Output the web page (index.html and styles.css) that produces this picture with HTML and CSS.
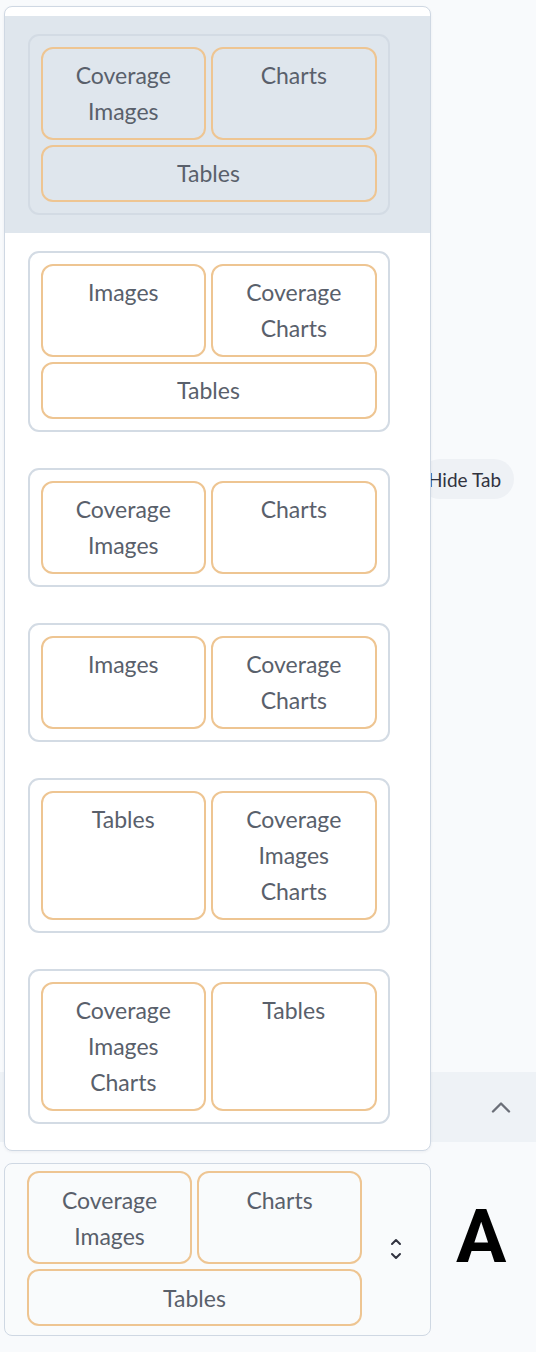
FILE: index.html
```html
<!DOCTYPE html>
<html>
<head>
<meta charset="utf-8">
<link rel="stylesheet" href="styles.css">
</head>
<body>
<div class="page">
  <div class="backdrop">
    <div class="tab-row"><span class="pill">Hide Tab</span></div>
    <div class="band">
      <svg class="band-chevron" width="20" height="12" viewBox="0 0 20 12"><path d="M2 10.5 L10 2.5 L18 10.5" fill="none" stroke="#6b6f78" stroke-width="2.4" stroke-linecap="round" stroke-linejoin="round"/></svg>
    </div>
    <div class="select-row">
      <div class="select">
        <div class="layout">
          <div class="box"><div>Coverage</div><div>Images</div></div>
          <div class="box"><div>Charts</div></div>
          <div class="box wide"><div>Tables</div></div>
        </div>
        <svg class="updown" width="14" height="26" viewBox="0 0 14 26"><path d="M3 8 L7 4 L11 8" fill="none" stroke="#31333f" stroke-width="2" stroke-linecap="round" stroke-linejoin="round"/><path d="M3 18 L7 22 L11 18" fill="none" stroke="#31333f" stroke-width="2" stroke-linecap="round" stroke-linejoin="round"/></svg>
      </div>
      <div class="big-a">A</div>
    </div>
  </div>

  <div class="menu">
    <div class="option active">
      <div class="card layout">
        <div class="box"><div>Coverage</div><div>Images</div></div>
        <div class="box"><div>Charts</div></div>
        <div class="box wide"><div>Tables</div></div>
      </div>
    </div>
    <div class="option">
      <div class="card layout">
        <div class="box"><div>Images</div></div>
        <div class="box"><div>Coverage</div><div>Charts</div></div>
        <div class="box wide"><div>Tables</div></div>
      </div>
    </div>
    <div class="option">
      <div class="card layout">
        <div class="box"><div>Coverage</div><div>Images</div></div>
        <div class="box"><div>Charts</div></div>
      </div>
    </div>
    <div class="option">
      <div class="card layout">
        <div class="box"><div>Images</div></div>
        <div class="box"><div>Coverage</div><div>Charts</div></div>
      </div>
    </div>
    <div class="option">
      <div class="card layout">
        <div class="box"><div>Tables</div></div>
        <div class="box"><div>Coverage</div><div>Images</div><div>Charts</div></div>
      </div>
    </div>
    <div class="option">
      <div class="card layout">
        <div class="box"><div>Coverage</div><div>Images</div><div>Charts</div></div>
        <div class="box"><div>Tables</div></div>
      </div>
    </div>
  </div>
</div>
</body>
</html>
```

FILE: styles.css
```css
* { box-sizing: border-box; }
html, body { margin: 0; padding: 0; }
body {
  background: #f8fafc;
  font-family: "Lato", "Source Sans Pro", "Noto Sans", sans-serif;
  color: #31333f;
  width: 536px;
  height: 1352px;
  overflow: hidden;
}
.page { position: relative; width: 536px; height: 1352px; }

.backdrop { display: flex; flex-direction: column; }
.tab-row { padding-top: 459px; padding-left: 420px; height: 499px; }
.pill {
  display: inline-flex;
  align-items: center;
  height: 40px;
  padding: 0 13px 0 8px;
  border-radius: 20px;
  background: #eef1f5;
  font-family: "Lato", "Source Sans Pro", sans-serif;
  font-size: 19px;
  color: #31333f;
}
.band {
  margin-top: 573px;
  height: 70px;
  background: #eef2f6;
  display: flex;
  align-items: center;
  justify-content: flex-end;
  padding-right: 25px;
}
.band-chevron { display: block; margin-top: -1px; }

.select-row {
  margin-top: 21px;
  display: flex;
  align-items: flex-start;
  padding-left: 4px;
}
.select {
  width: 427px;
  height: 173px;
  border: 1.5px solid #cfd8e3;
  border-radius: 8px;
  background: #f9fbfc;
  display: flex;
  align-items: center;
  padding: 0 0 2px 22px;
}
.select .layout { width: 335px; }
.updown { display: block; margin-left: 27px; }
.big-a {
  margin-left: 25px;
  margin-top: 36px;
  font-family: "Roboto", "Liberation Sans", Arial, sans-serif;
  font-weight: 700;
  font-size: 75px;
  line-height: 1;
  color: #000;
}

.layout {
  display: grid;
  grid-template-columns: 1fr 1fr;
  gap: 5px;
}
.box {
  border: 2px solid #eec592;
  border-radius: 12px;
  padding: 8.5px 4px;
  text-align: center;
  font-size: 23px;
  line-height: 36px;
  color: #59606b;
}
.box.wide { grid-column: 1 / span 2; }

.menu {
  position: absolute;
  top: 6px;
  left: 4px;
  width: 427px;
  background: #fff;
  border: 1.5px solid #cfd8e3;
  border-radius: 8px;
  padding: 8.5px 0;
  box-shadow: 0 1px 3px rgba(30, 40, 60, 0.06);
}
.option { padding: 18px 0 18px 22.5px; }
.option.active { background: #dfe6ed; }
.card {
  width: 362px;
  border: 2px solid #d3dbe4;
  border-radius: 11px;
  padding: 11px;
}
```
